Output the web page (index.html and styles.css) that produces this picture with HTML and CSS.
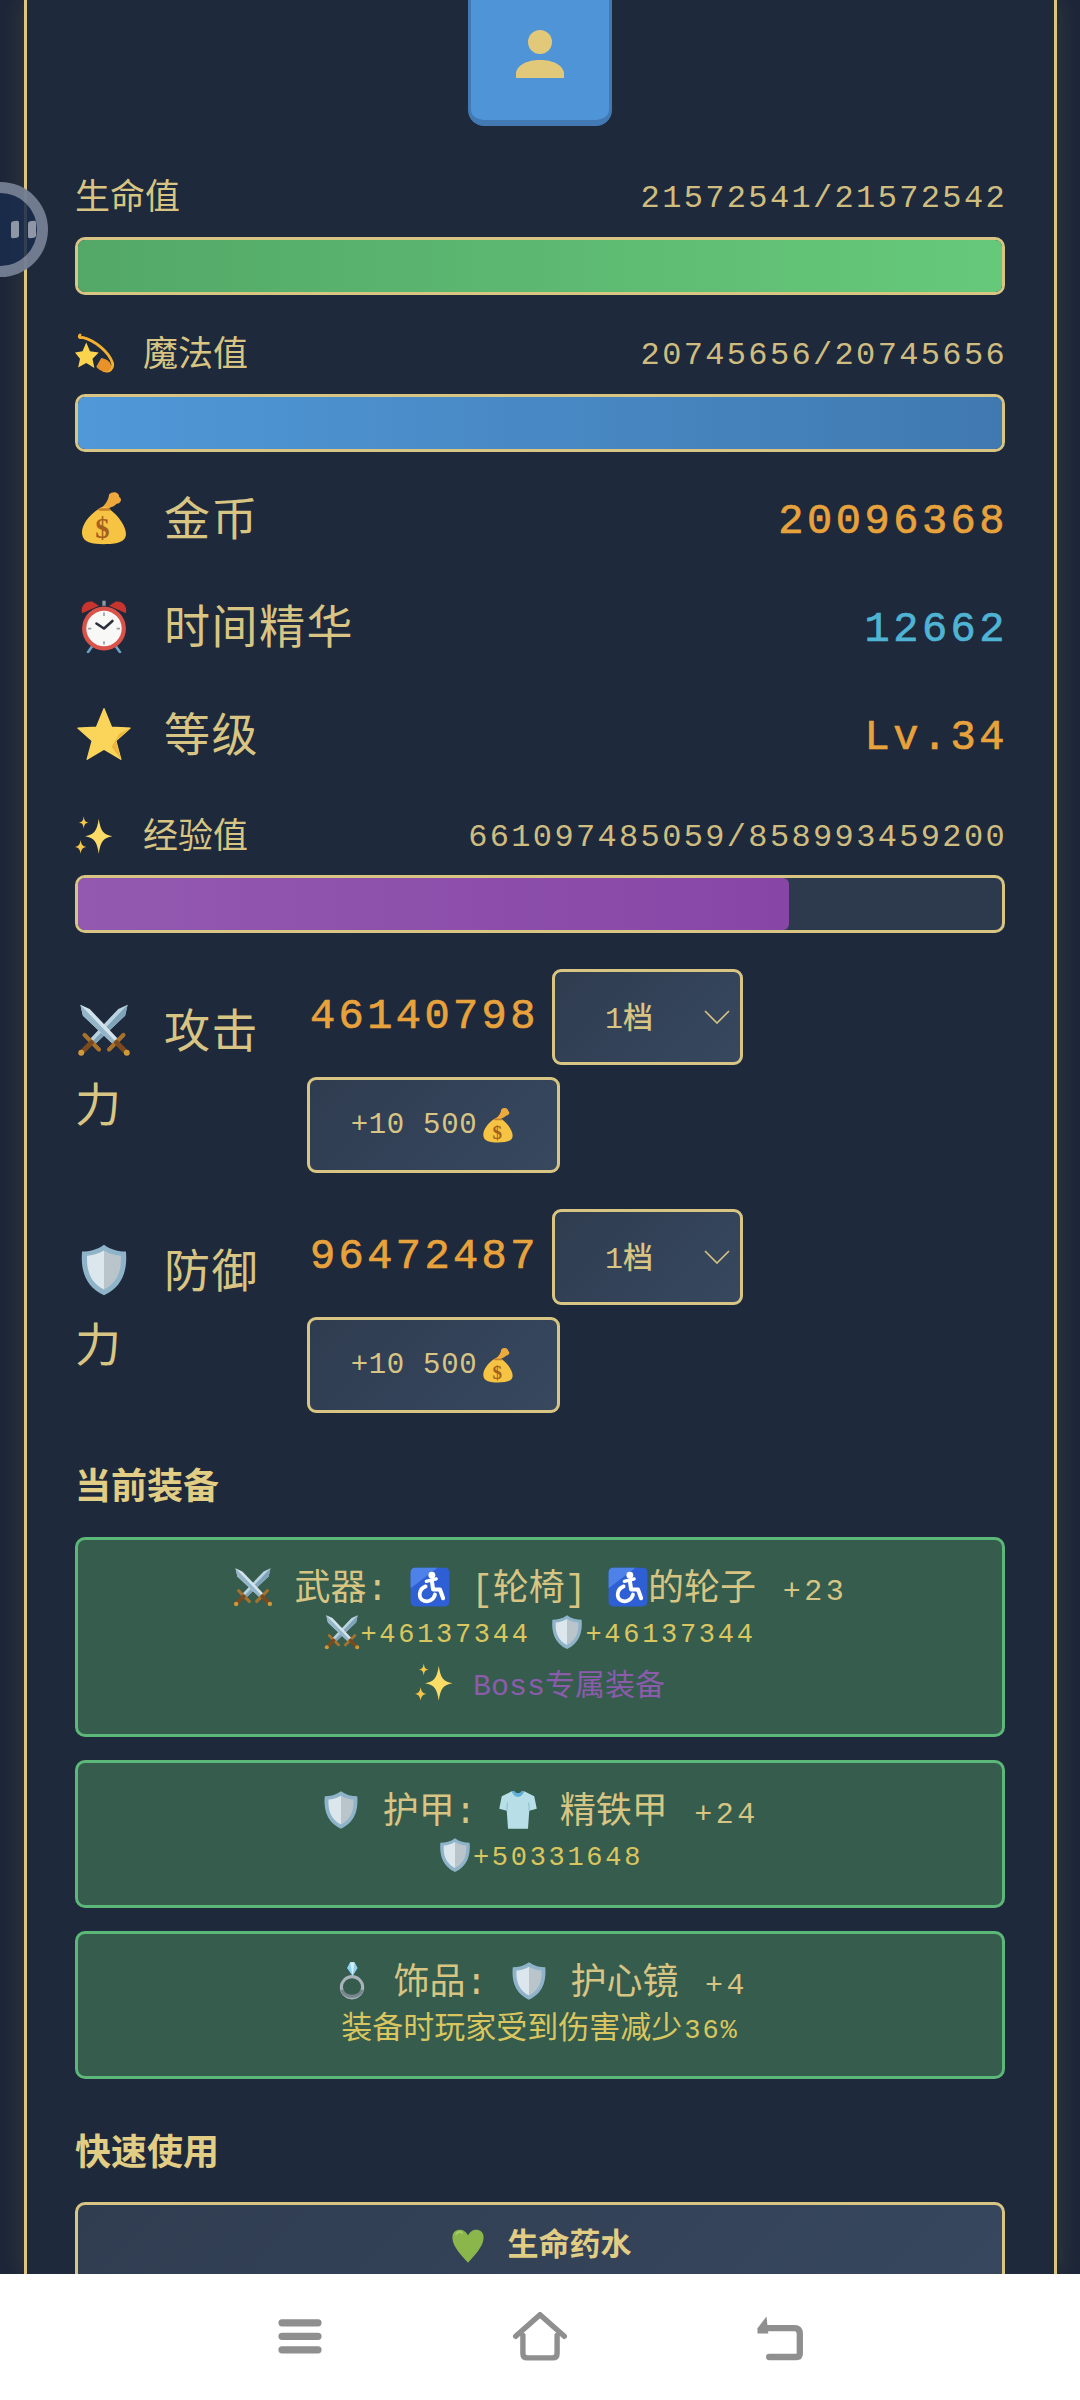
FILE: index.html
```html
<!DOCTYPE html>
<html lang="zh-CN">
<head>
    <meta name="viewport" content="width=device-width, initial-scale=1.0">
    <meta charset="UTF-8">
    <title>角色状态</title>
    <link rel="stylesheet" href="styles.css">
</head>
<body>
<svg class="defs" width="0" height="0">
    <symbol id="i-swords" viewBox="0 0 64 64">
        <path d="M60 2 L57 15 L20 50 L14 44 L49 7 Z" fill="#b9d3e0"/>
        <path d="M60 2 L17 47 L20 50 L57 15 Z" fill="#7fa3b8"/>
        <path d="M4 2 L7 15 L44 50 L50 44 L15 7 Z" fill="#d3e3ec"/>
        <path d="M4 2 L47 47 L44 50 L7 15 Z" fill="#94b5c7"/>
        <path d="M9 38 L26 55 M55 38 L38 55" stroke="#a9722c" stroke-width="5" stroke-linecap="round"/>
        <path d="M17 47 L6 58 M47 47 L58 58" stroke="#7b4a1f" stroke-width="6" stroke-linecap="round"/>
        <circle cx="5" cy="59" r="3.5" fill="#d09a3a"/>
        <circle cx="59" cy="59" r="3.5" fill="#d09a3a"/>
    </symbol>
    <symbol id="i-shield" viewBox="0 0 64 64">
        <path d="M32 2 C40 8 49 10 58 10 C60 32 54 52 32 62 C10 52 4 32 6 10 C15 10 24 8 32 2 Z" fill="#8fb4c9"/>
        <path d="M32 9 C39 13 46 15 52 15 C53 33 48 47 32 55 Z" fill="#b9c4cb"/>
        <path d="M32 9 C25 13 18 15 12 15 C11 33 16 47 32 55 Z" fill="#dbe7ed"/>
    </symbol>
    <symbol id="i-bag" viewBox="0 0 64 64">
        <path d="M38 4 C42 0 50 1 50 7 C54 9 52 15 47 15 C44 19 38 19 36 22 L29 20 C33 16 37 12 38 4 Z" fill="#eda93c"/>
        <path d="M26 21 C12 30 5 42 6 51 C7 61 18 63 32 63 C46 63 58 61 58 51 C58 42 50 30 38 21 C34 18 30 18 26 21 Z" fill="#f6c343"/>
        <path d="M27 22 L38 22" stroke="#c77d2a" stroke-width="3" stroke-linecap="round"/>
        <text x="31" y="56" class="bag-sign" text-anchor="middle">$</text>
    </symbol>
    <symbol id="i-dizzy" viewBox="0 0 64 64">
        <path d="M8 3 C5 7 8 8 12 7 C32 12 54 30 60 48 C62 58 54 63 46 60" fill="none" stroke="#f4b02f" stroke-width="4.5" stroke-linecap="round"/>
        <path d="M42 40 C54 42 60 50 57 57 C52 65 40 62 34 54 Z" fill="#e8932a"/>
        <path d="M18 15 L24 29 L38 31 L28 41 L31 56 L18 48 L5 55 L8 41 L0 31 L12 29 Z" fill="#fbd34d"/>
    </symbol>
    <symbol id="i-clock" viewBox="0 0 64 64">
        <path d="M18 56 L13 63 M46 56 L51 63" stroke="#6ba3c4" stroke-width="3" stroke-linecap="round"/>
        <path d="M6 17 C4 8 10 2 18 3 L26 8 Z M58 17 C60 8 54 2 46 3 L38 8 Z" fill="#c8352e"/>
        <rect x="30" y="2" width="4" height="6" fill="#8a9aa5"/>
        <circle cx="32" cy="35" r="26" fill="#d9534a"/>
        <circle cx="32" cy="35" r="21" fill="#f8f8f6"/>
        <path d="M32 35 L23 29 M32 35 L42 26" stroke="#2c2f38" stroke-width="3" stroke-linecap="round"/>
        <path d="M32 16 V20 M32 50 V54 M13 35 H17 M47 35 H51" stroke="#99a0a8" stroke-width="2"/>
    </symbol>
    <symbol id="i-star" viewBox="0 0 64 64">
        <path d="M32 2 L41 24 L63 25 L46 40 L52 62 L32 50 L12 62 L18 40 L1 25 L23 24 Z" fill="#fad55a" stroke="#fad55a" stroke-width="1.5" stroke-linejoin="round"/>
        <path d="M63 25 L46 40 L52 62 L41 47 L50 32 Z" fill="#eeb63a"/>
    </symbol>
    <symbol id="i-spark" viewBox="0 0 64 64">
        <path d="M38 6 C41 26 45 31 60 34 C45 37 41 42 38 62 C35 42 31 37 16 34 C31 31 35 26 38 6 Z" fill="#fbdc66"/>
        <path d="M14 2 C15 9 16 11 22 12 C16 13 15 15 14 22 C13 15 12 13 6 12 C12 11 13 9 14 2 Z" fill="#f4c64a"/>
        <path d="M9 40 C10 47 12 50 18 51 C12 52 10 55 9 62 C8 55 6 52 0 51 C6 50 8 47 9 40 Z" fill="#f4c64a"/>
    </symbol>
    <symbol id="i-wheel" viewBox="0 0 64 64">
        <rect x="1" y="1" width="62" height="62" rx="7" fill="#2f5fd4"/>
        <path d="M1 12 V8 C1 4 4 1 8 1 H44 L1 34 Z" fill="#4f82e8"/>
        <circle cx="35" cy="13" r="5.5" fill="#fff"/>
        <path d="M35 22 L37 36 L48 36 L53 50" fill="none" stroke="#fff" stroke-width="6.5" stroke-linecap="round" stroke-linejoin="round"/>
        <path d="M25 31 C14 35 12 50 22 54 C30 57 38 52 40 44" fill="none" stroke="#fff" stroke-width="6" stroke-linecap="round"/>
        <path d="M26 23 L42 19" stroke="#fff" stroke-width="5" stroke-linecap="round"/>
    </symbol>
    <symbol id="i-shirt" viewBox="0 0 64 64">
        <path d="M22 2 L6 10 L2 30 L14 33 L16 62 L48 62 L50 33 L62 30 L58 10 L42 2 C38 8 26 8 22 2 Z" fill="#b8dfe8"/>
        <path d="M22 2 C26 14 38 14 42 2 L38 1 C36 6 28 6 26 1 Z" fill="#5fb0d9"/>
        <path d="M14 33 L15 20 M50 33 L49 20" stroke="#8fc5d4" stroke-width="2"/>
    </symbol>
    <symbol id="i-ring" viewBox="0 0 64 64">
        <circle cx="32" cy="42" r="17" fill="none" stroke="#a9b4b9" stroke-width="5"/>
        <path d="M16 46 C20 60 44 60 48 46" fill="none" stroke="#78868d" stroke-width="5"/>
        <path d="M24 11 L29 2 H36 L41 11 L33 24 Z" fill="#8fd2f0"/>
        <path d="M29 2 H36 L33 24 Z" fill="#d2effa"/>
    </symbol>
    <symbol id="i-heart" viewBox="0 0 64 64">
        <path d="M32 62 C14 42 4 30 6 16 C8 4 26 2 32 16 C38 2 56 4 58 16 C60 30 50 42 32 62 Z" fill="#8ab64c"/>
        <path d="M12 14 C15 9 20 9 22 12" fill="none" stroke="#a9cf6c" stroke-width="3" stroke-linecap="round"/>
    </symbol>
</svg>

<div class="app">
    <div class="screen">
        <div class="float_ball">
            <span class="ball_dot"></span><span class="ball_dot"></span>
        </div>
        <main class="panel">
            <div class="avatar">
                <svg class="avatar_icon" viewBox="0 0 50 48">
                    <ellipse cx="25" cy="12" rx="12" ry="12" fill="#e2c97a"/>
                    <path d="M1 48 V44 C1 36 11 30 25 30 C39 30 49 36 49 44 V48 Z" fill="#e2c97a"/>
                </svg>
            </div>

            <div class="bar_head first">
                <span class="bar_name">生命值</span>
                <span class="bar_num">21572541/21572542</span>
            </div>
            <div class="bar"><div class="fill fill_hp"></div></div>

            <div class="bar_head">
                <span class="bar_name"><svg class="emo"><use href="#i-dizzy"/></svg>魔法值</span>
                <span class="bar_num">20745656/20745656</span>
            </div>
            <div class="bar"><div class="fill fill_mp"></div></div>

            <div class="res_list">
                <div class="res_row">
                    <span class="res_name"><svg class="emo_big"><use href="#i-bag"/></svg>金币</span>
                    <span class="res_num orange">20096368</span>
                </div>
                <div class="res_row">
                    <span class="res_name"><svg class="emo_big"><use href="#i-clock"/></svg>时间精华</span>
                    <span class="res_num blue">12662</span>
                </div>
                <div class="res_row">
                    <span class="res_name"><svg class="emo_big"><use href="#i-star"/></svg>等级</span>
                    <span class="res_num orange">Lv.34</span>
                </div>
            </div>

            <div class="bar_head exp">
                <span class="bar_name"><svg class="emo"><use href="#i-spark"/></svg>经验值</span>
                <span class="bar_num">661097485059/858993459200</span>
            </div>
            <div class="bar"><div class="fill fill_exp" style="width: 77%"></div></div>

            <div class="stat">
                <div class="stat_name"><svg class="emo_big"><use href="#i-swords"/></svg>攻击力</div>
                <div class="stat_ctrl">
                    <span class="stat_num">46140798</span>
                    <div class="picker"><span>1档</span>
                        <svg class="chevron" viewBox="0 0 26 14"><path d="M1 1 L13 13 L25 1" fill="none" stroke="#d8c583" stroke-width="1.6"/></svg>
                    </div>
                    <div class="up_btn">+10 500<svg class="emo_btn"><use href="#i-bag"/></svg></div>
                </div>
            </div>
            <div class="stat">
                <div class="stat_name"><svg class="emo_big"><use href="#i-shield"/></svg>防御力</div>
                <div class="stat_ctrl">
                    <span class="stat_num">96472487</span>
                    <div class="picker"><span>1档</span>
                        <svg class="chevron" viewBox="0 0 26 14"><path d="M1 1 L13 13 L25 1" fill="none" stroke="#d8c583" stroke-width="1.6"/></svg>
                    </div>
                    <div class="up_btn">+10 500<svg class="emo_btn"><use href="#i-bag"/></svg></div>
                </div>
            </div>

            <h2 class="section_title">当前装备</h2>
            <div class="gear_list">
                <div class="gear">
                    <div class="gear_name"><svg class="emo"><use href="#i-swords"/></svg> 武器: <svg class="emo"><use href="#i-wheel"/></svg> [轮椅] <svg class="emo"><use href="#i-wheel"/></svg>的轮子 <span class="plus">+23</span></div>
                    <div class="gear_bonus"><svg class="emo_small"><use href="#i-swords"/></svg>+46137344 <svg class="emo_small"><use href="#i-shield"/></svg>+46137344</div>
                    <div class="gear_boss"><svg class="emo"><use href="#i-spark"/></svg> Boss专属装备</div>
                </div>
                <div class="gear">
                    <div class="gear_name"><svg class="emo"><use href="#i-shield"/></svg> 护甲: <svg class="emo"><use href="#i-shirt"/></svg> 精铁甲 <span class="plus">+24</span></div>
                    <div class="gear_bonus"><svg class="emo_small"><use href="#i-shield"/></svg>+50331648</div>
                </div>
                <div class="gear">
                    <div class="gear_name"><svg class="emo"><use href="#i-ring"/></svg> 饰品: <svg class="emo"><use href="#i-shield"/></svg> 护心镜 <span class="plus">+4</span></div>
                    <div class="gear_bonus cjk">装备时玩家受到伤害减少<span class="pct">36%</span></div>
                </div>
            </div>

            <h2 class="section_title quick">快速使用</h2>
            <div class="quick_btn"><svg class="emo heart"><use href="#i-heart"/></svg>生命药水</div>
        </main>
    </div>

    <nav class="nav_bar">
        <svg class="nav_icon" viewBox="0 0 60 60">
            <path d="M10 12 H50 M10 27 H50 M10 42 H50" stroke="#8f8f8f" stroke-width="8" stroke-linecap="round"/>
        </svg>
        <svg class="nav_icon" viewBox="0 0 60 60">
            <path d="M3 27 L30 3 L57 27 M11 26 V46 Q11 51 16 51 H44 Q49 51 49 46 V26" fill="none" stroke="#8f8f8f" stroke-width="6" stroke-linejoin="round" stroke-linecap="round"/>
        </svg>
        <svg class="nav_icon" viewBox="0 0 60 60">
            <path d="M12 18 H46 Q52 18 52 24 V46 Q52 50 48 50 H18" fill="none" stroke="#8f8f8f" stroke-width="7" stroke-linecap="round"/>
            <path d="M15 5 L5 18 L5 24 L17 24 Z" fill="#8f8f8f"/>
        </svg>
    </nav>
</div>
</body>
</html>
```

FILE: styles.css
```css
:root {
    --gold: #e2cd85;
    --gold-soft: #d8c583;
    --line: #dcc67f;
    --panel: #1e293b;
    --orange: #e8a23c;
    --blue: #4fb3d4;
}

* {
    margin: 0;
    padding: 0;
    box-sizing: border-box;
}

body {
    font-family: "Noto Sans CJK SC", "Liberation Sans", sans-serif;
    color: var(--gold);
    background: var(--panel);
}

.defs {
    position: absolute;
}

.bag-sign {
    font-family: "Liberation Serif", serif;
    font-size: 34px;
    font-weight: bold;
    fill: #a5601f;
}

.app {
    width: 1080px;
    height: 2400px;
    display: flex;
    flex-direction: column;
    overflow: hidden;
}

.screen {
    position: relative;
    flex: 1;
    overflow: hidden;
    background: #1c2638;
}

.panel {
    width: 1033px;
    height: 2274px;
    margin-left: 24px;
    padding: 0 49px 0 48px;
    background: var(--panel);
    border-left: 3px solid var(--line);
    border-right: 3px solid var(--line);
    box-shadow: 0 0 24px rgba(226, 205, 133, 0.14);
}

/* floating ball of the phone, lies over the page */
.float_ball {
    position: absolute;
    left: -47px;
    top: 182px;
    width: 95px;
    height: 95px;
    border-radius: 50%;
    border: 11px solid rgba(150, 158, 172, 0.7);
    background: rgba(26, 43, 76, 0.88);
    display: flex;
    justify-content: flex-end;
    align-items: center;
    gap: 9px;
    z-index: 2;
}

.ball_dot {
    width: 8px;
    height: 17px;
    border-radius: 2px;
    background: #8f97a6;
    transform: translateX(-1px) skewY(-8deg);
}

.avatar {
    width: 144px;
    height: 126px;
    margin: 0 auto 50px;
    padding-top: 30px;
    background: #4f94d6;
    border: 6px solid #4279b3;
    border-top: 0;
    border-left-width: 3px;
    border-right-width: 3px;
    border-radius: 0 0 16px 16px;
    display: flex;
    justify-content: center;
    align-items: flex-start;
}

.avatar_icon {
    width: 50px;
    height: 48px;
}

.bar_head {
    height: 40px;
    margin: 38px 0 21px;
    display: flex;
    justify-content: space-between;
    align-items: center;
}

.bar_head.first {
    margin-top: 0;
}

.bar_head.exp {
    margin: 27px 0 20px;
}

.bar_name {
    padding-bottom: 6px;
    font-size: 35px;
    color: var(--gold-soft);
    display: flex;
    align-items: center;
    gap: 28px;
}

.bar_name .emo {
    margin-top: 6px;
}

.bar_num {
    padding-top: 5px;
    font-family: "Liberation Mono", monospace;
    font-size: 32px;
    letter-spacing: 2.35px;
    margin-right: -2px;
    color: #cfbd80;
}

.bar {
    height: 58px;
    background: #2d3a4d;
    border: 3px solid var(--gold-soft);
    border-radius: 10px;
    overflow: hidden;
}

.fill {
    height: 100%;
    border-radius: 6px;
}

.fill_hp {
    background: linear-gradient(90deg, #53a868, #66c97a);
}

.fill_mp {
    background: linear-gradient(90deg, #5098d8, #4079b0);
}

.fill_exp {
    background: linear-gradient(90deg, #9359b0, #8746a6);
}

.emo {
    width: 40px;
    height: 40px;
    flex-shrink: 0;
    vertical-align: -7px;
}

.emo_big {
    width: 54px;
    height: 54px;
    margin-right: 33px;
    margin-left: 2px;
    flex-shrink: 0;
    vertical-align: -10px;
}

.emo_small {
    width: 36px;
    height: 36px;
    vertical-align: -8px;
}

.emo_btn {
    width: 36px;
    height: 36px;
    margin-left: 3px;
    vertical-align: -7px;
}

.res_list {
    margin-top: 12px;
}

.res_row {
    height: 108px;
    display: flex;
    justify-content: space-between;
    align-items: center;
}

.res_name {
    padding-bottom: 6px;
    font-size: 46px;
    letter-spacing: 1.5px;
    display: flex;
    align-items: center;
    color: var(--gold-soft);
}

.res_name .emo_big {
    margin-top: 6px;
}

.res_num {
    padding-top: 8px;
    font-family: "Liberation Mono", monospace;
    font-size: 42px;
    -webkit-text-stroke: 0.7px currentColor;
    letter-spacing: 3.5px;
    margin-right: -3px;
}

.orange {
    color: var(--orange);
}

.blue {
    color: var(--blue);
}

.stat {
    display: flex;
    align-items: center;
    margin-top: 36px;
}

.stat_name {
    width: 205px;
    margin-right: 27px;
    margin-bottom: 14px;
    font-size: 46px;
    line-height: 74px;
    letter-spacing: 1.5px;
    color: var(--gold-soft);
}

.stat_ctrl {
    flex: 1;
    display: flex;
    flex-wrap: wrap;
    align-items: center;
    gap: 12px;
}

.stat_num {
    width: 233px;
    padding-left: 3px;
    font-family: "Liberation Mono", monospace;
    font-size: 42px;
    -webkit-text-stroke: 0.7px currentColor;
    letter-spacing: 3.4px;
    color: var(--orange);
    white-space: nowrap;
}

.picker,
.up_btn {
    height: 96px;
    background: linear-gradient(135deg, #2f3c50, #37485f);
    border: 3px solid var(--gold-soft);
    border-radius: 9px;
    color: var(--gold-soft);
    display: flex;
    align-items: center;
}

.picker {
    width: 191px;
    padding: 0 10px 0 50px;
    justify-content: space-between;
    font-family: "Liberation Mono", "Noto Sans CJK SC", monospace;
    font-size: 30px;
    font-weight: 500;
}

.picker span {
    margin-bottom: 4px;
}

.chevron {
    width: 26px;
    height: 14px;
}

.up_btn {
    width: 253px;
    justify-content: center;
    font-family: "Liberation Mono", monospace;
    font-size: 29px;
    letter-spacing: 0.7px;
    white-space: pre;
}

.section_title {
    height: 40px;
    margin: 50px 0 34px;
    font-size: 36px;
    line-height: 40px;
    font-weight: bold;
    color: var(--gold);
}

.section_title.quick {
    margin-bottom: 33px;
}

.gear_list {
    display: flex;
    flex-direction: column;
    gap: 23px;
}

.gear {
    padding: 23px 0;
    background: #355c4d;
    border: 3px solid #5cb878;
    border-radius: 10px;
    text-align: center;
}

.gear_name {
    height: 46px;
    padding-top: 4px;
    line-height: 44px;
    font-family: "Liberation Mono", "Noto Sans CJK SC", monospace;
    font-size: 36px;
    color: var(--gold-soft);
    white-space: nowrap;
}

.plus,
.gear_bonus,
.gear_boss {
    font-family: "Liberation Mono", "Noto Sans CJK SC", monospace;
}

.plus {
    margin-left: 5px;
    font-size: 30px;
    letter-spacing: 3.5px;
}

.gear_bonus {
    height: 50px;
    line-height: 52px;
    font-size: 27px;
    letter-spacing: 2.7px;
    color: #d9c65e;
}

.gear_bonus.cjk {
    font-family: "Noto Sans CJK SC", sans-serif;
    font-size: 31px;
    line-height: 44px;
    letter-spacing: 0;
}

.pct {
    font-family: "Liberation Mono", monospace;
    font-size: 27px;
    letter-spacing: 2px;
    margin-left: 2px;
}

.gear_boss {
    height: 52px;
    line-height: 56px;
    font-size: 30px;
    color: #8a5cab;
}

.quick_btn {
    height: 90px;
    background: linear-gradient(135deg, #303d51, #37475e);
    border: 3px solid var(--gold-soft);
    border-radius: 10px;
    font-size: 31px;
    font-weight: bold;
    line-height: 74px;
    text-align: center;
    color: var(--gold);
}

.heart {
    width: 38px;
    height: 38px;
    margin-right: 21px;
    vertical-align: -9px;
}

.nav_bar {
    height: 126px;
    flex-shrink: 0;
    background: #ffffff;
    display: grid;
    grid-template-columns: repeat(3, 240px);
    justify-content: center;
    justify-items: center;
    padding-top: 38px;
    position: relative;
    z-index: 3;
}

.nav_icon {
    width: 60px;
    height: 54px;
}
```
